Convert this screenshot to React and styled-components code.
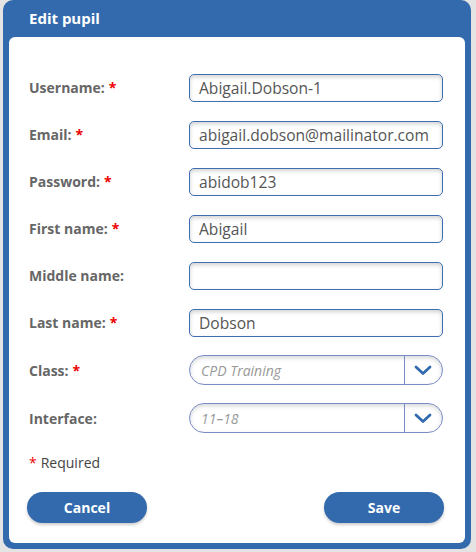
import React from 'react';
import styled, { createGlobalStyle } from 'styled-components';

const blue = '#336aad';

const GlobalStyle = createGlobalStyle`
  html, body {
    margin: 0;
    padding: 0;
    background: #e4e4e4;
    font-family: 'Open Sans', 'Liberation Sans', sans-serif;
  }
`;

const Dialog = styled.div`
  margin-left: 3px;
  width: 468px;
  height: 549px;
  background: ${blue};
  border-radius: 10px;
  display: flex;
  flex-direction: column;
  box-sizing: border-box;
`;

const Title = styled.div`
  height: 37px;
  padding-left: 26px;
  display: flex;
  align-items: center;
  color: #fff;
  font-weight: 700;
  font-size: 15px;
  padding-bottom: 1px;
  box-sizing: border-box;
`;

const Panel = styled.div`
  flex: 1;
  margin: 0 6px 6px;
  background: #fff;
  border-radius: 6px;
  padding: 27px 22px 20px 20px;
  display: flex;
  flex-direction: column;
`;

const Row = styled.div`
  height: ${({ $tall }) => ($tall ? '48px' : '47px')};
  display: grid;
  grid-template-columns: 160px 254px;
  align-items: center;
`;

const Label = styled.label`
  font-size: 14px;
  font-weight: 700;
  color: #666;
`;

const Star = styled.span`
  color: #e00;
  font-weight: 700;
  margin-left: 4px;
`;

const Input = styled.input`
  height: 28px;
  width: 254px;
  box-sizing: border-box;
  border: 1px solid #3f6fb0;
  border-radius: 5px;
  padding: 0 6px 0 9px;
  font-family: inherit;
  font-size: 15.6px;
  color: #555;
  box-shadow: inset 0 2px 4px rgba(0, 0, 0, 0.18);
  outline: none;
`;

const Select = styled.div`
  height: 30px;
  width: 254px;
  box-sizing: border-box;
  border: 1px solid #7a8cc4;
  border-radius: 15px;
  display: flex;
  align-items: stretch;
  background: #fff;
  box-shadow: inset 0 2px 4px rgba(0, 0, 0, 0.16);
  overflow: hidden;
`;

const SelectValue = styled.div`
  flex: 1;
  display: flex;
  align-items: center;
  padding-left: 11px;
  font-size: 14px;
  font-style: italic;
  color: #999;
`;

const SelectButton = styled.div`
  width: 35px;
  border-left: 1px solid #7a8cc4;
  display: flex;
  align-items: center;
  justify-content: center;
  padding-right: 2px;
`;

const Required = styled.div`
  margin-top: 12px;
  font-size: 14px;
  color: #444;
  line-height: 18px;
  span {
    color: #e00;
    margin-right: 4px;
  }
`;

const Buttons = styled.div`
  margin-top: auto;
  display: flex;
  justify-content: space-between;
  margin-left: -2px;
  margin-right: -1px;
`;

const Button = styled.button`
  width: 120px;
  height: 31px;
  border: none;
  border-radius: 16px;
  background: ${blue};
  color: #fff;
  font-family: inherit;
  font-weight: 700;
  font-size: 14px;
  box-shadow: 0 2px 3px rgba(0, 0, 0, 0.2);
`;

const Chevron = () => (
  <svg width="18" height="12" viewBox="0 0 18 12">
    <path d="M2 3 L9 9.5 L16 3" fill="none" stroke={blue} strokeWidth="2.8" strokeLinecap="round" strokeLinejoin="round" />
  </svg>
);

const fields = [
  { label: 'Username:', value: 'Abigail.Dobson-1', req: true },
  { label: 'Email:', value: 'abigail.dobson@mailinator.com', req: true },
  { label: 'Password:', value: 'abidob123', req: true },
  { label: 'First name:', value: 'Abigail', req: true },
  { label: 'Middle name:', value: '', req: false },
  { label: 'Last name:', value: 'Dobson', req: true },
];

const selects = [
  { label: 'Class:', value: 'CPD Training', req: true },
  { label: 'Interface:', value: '11–18', req: false },
];

const App = () => (
  <>
    <GlobalStyle />
    <Dialog>
      <Title>Edit pupil</Title>
      <Panel>
        {fields.map((f) => (
          <Row key={f.label}>
            <Label>
              {f.label}
              {f.req && <Star>*</Star>}
            </Label>
            <Input defaultValue={f.value} />
          </Row>
        ))}
        {selects.map((s) => (
          <Row key={s.label} $tall>
            <Label>
              {s.label}
              {s.req && <Star>*</Star>}
            </Label>
            <Select>
              <SelectValue>{s.value}</SelectValue>
              <SelectButton>
                <Chevron />
              </SelectButton>
            </Select>
          </Row>
        ))}
        <Required>
          <span>*</span>Required
        </Required>
        <Buttons>
          <Button>Cancel</Button>
          <Button>Save</Button>
        </Buttons>
      </Panel>
    </Dialog>
  </>
);

export default App;
